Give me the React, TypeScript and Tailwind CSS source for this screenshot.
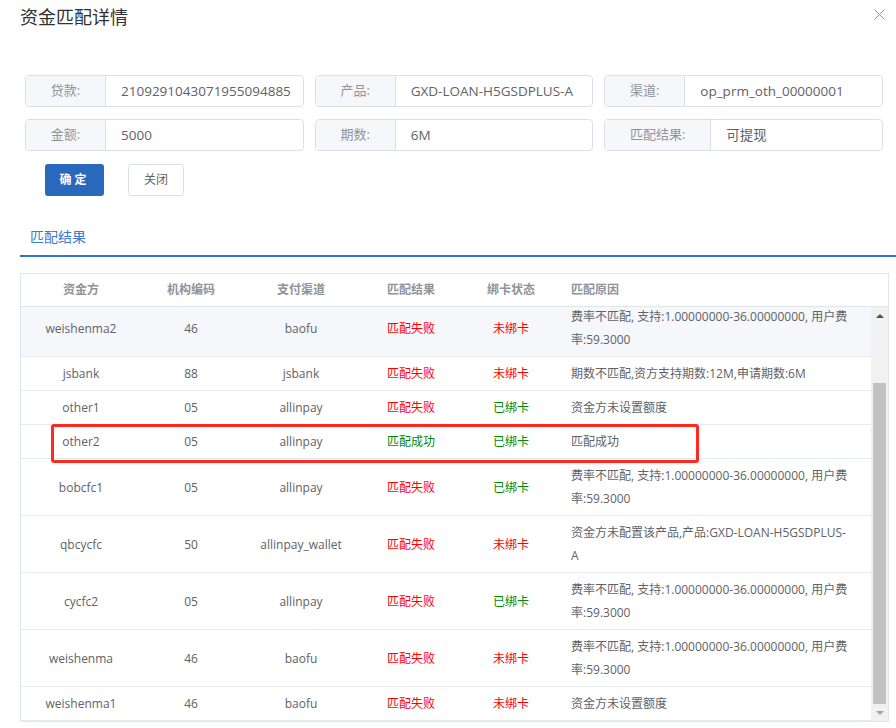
const fields = [
    { label: "贷款:", value: "2109291043071955094885", labelW: "w-[80px]" },
    { label: "产品:", value: "GXD-LOAN-H5GSDPLUS-A", labelW: "w-[80px]" },
    { label: "渠道:", value: "op_prm_oth_00000001", labelW: "w-[80px]" },
    { label: "金额:", value: "5000", labelW: "w-[80px]" },
    { label: "期数:", value: "6M", labelW: "w-[80px]" },
    { label: "匹配结果:", value: "可提现", labelW: "w-[106px]" }
];

const feeReason = ["费率不匹配, 支持:1.00000000-36.00000000, 用户费", "率:59.3000"];

const rows = [
    { name: "weishenma2", code: "46", pay: "baofu", ok: false, bound: false, reason: feeReason, striped: true },
    { name: "jsbank", code: "88", pay: "jsbank", ok: false, bound: false, reason: ["期数不匹配,资方支持期数:12M,申请期数:6M"] },
    { name: "other1", code: "05", pay: "allinpay", ok: false, bound: true, reason: ["资金方未设置额度"] },
    { name: "other2", code: "05", pay: "allinpay", ok: true, bound: true, reason: ["匹配成功"] },
    { name: "bobcfc1", code: "05", pay: "allinpay", ok: false, bound: true, reason: feeReason },
    { name: "qbcycfc", code: "50", pay: "allinpay_wallet", ok: false, bound: false, reason: ["资金方未配置该产品,产品:GXD-LOAN-H5GSDPLUS-", "A"] },
    { name: "cycfc2", code: "05", pay: "allinpay", ok: false, bound: true, reason: feeReason },
    { name: "weishenma", code: "46", pay: "baofu", ok: false, bound: false, reason: feeReason },
    { name: "weishenma1", code: "46", pay: "baofu", ok: false, bound: false, reason: ["资金方未设置额度"] }
];

const cols = "grid grid-cols-[120px_100px_120px_100px_100px_1fr]";

export default function App() {
    return (
        <div className="relative w-[896px] h-[728px] overflow-hidden bg-white text-[#606266] font-['Open_Sans','Noto_Sans_CJK_SC',sans-serif]">
            <div className="flex items-start justify-between h-[36px] pt-[4px] pl-[20px] pr-[11px]">
                <h1 className="text-[18px] leading-[26px] text-[#303133]">资金匹配详情</h1>
                <svg width="11" height="11" viewBox="0 0 11 11" className="mt-[5px]">
                    <path d="M0.5 0.5 L10.5 10.5 M10.5 0.5 L0.5 10.5" stroke="#909399" strokeWidth="1" />
                </svg>
            </div>

            <div className="grid grid-cols-3 gap-x-[11px] gap-y-[12px] mt-[39px] ml-[25px] w-[858px]">
                {fields.map((f) => (
                    <div key={f.label} className="flex h-[32px] border border-[#dcdfe6] rounded-[4px] overflow-hidden text-[13px]">
                        <div className={`${f.labelW} shrink-0 flex items-center justify-center bg-[#f5f7fa] border-r border-[#dcdfe6] text-[#909399]`}>
                            {f.label}
                        </div>
                        <div className="flex items-center pl-[15px] whitespace-nowrap text-[13.5px]">{f.value}</div>
                    </div>
                ))}
            </div>

            <div className="flex mt-[13px] pl-[45px] gap-[24px]">
                <button className="w-[59px] h-[32px] rounded-[3px] bg-[#2a68bd] text-white text-[12px] font-bold tracking-[3px]">确定</button>
                <button className="w-[56px] h-[32px] rounded-[3px] border border-[#dcdfe6] bg-white text-[12px]">关闭</button>
            </div>

            <div className="mt-[23px] ml-[20px] border-b-2 border-[#2f74d3] h-[38px]">
                <div className="pl-[10px] leading-[36px] text-[14px] text-[#3a7bd5]">匹配结果</div>
            </div>

            <div className="mt-[16px] ml-[20px] w-[869px] border border-[#dfe6ec] text-[12px]">
                <div className={`${cols} h-[33px] items-center border-b border-[#dfe6ec] font-bold text-[#909399]`}>
                    <div className="text-center">资金方</div>
                    <div className="text-center">机构编码</div>
                    <div className="text-center">支付渠道</div>
                    <div className="text-center">匹配结果</div>
                    <div className="text-center">绑卡状态</div>
                    <div className="pl-[10px]">匹配原因</div>
                </div>
                <div className="flex h-[414px]">
                    <div className="flex-1 overflow-hidden">
                        <div className="-mt-[7px]">
                            {rows.map((r) => (
                                <div key={r.name} className={`${cols} items-center py-[5px] border-b border-[#e6ebf2] leading-[23px] ${r.striped ? "bg-[#f5f7fa]" : "bg-white"}`}>
                                    <div className="text-center">{r.name}</div>
                                    <div className="text-center">{r.code}</div>
                                    <div className="text-center">{r.pay}</div>
                                    <div className={`text-center ${r.ok ? "text-[#008a00]" : "text-[#ff0000]"}`}>{r.ok ? "匹配成功" : "匹配失败"}</div>
                                    <div className={`text-center ${r.bound ? "text-[#008a00]" : "text-[#ff0000]"}`}>{r.bound ? "已绑卡" : "未绑卡"}</div>
                                    <div className="pl-[10px] whitespace-nowrap">
                                        {r.reason.map((line, i) => (
                                            <div key={i}>{line}</div>
                                        ))}
                                    </div>
                                </div>
                            ))}
                        </div>
                    </div>
                    <div className="w-[17px] flex flex-col bg-[#f1f1f1]">
                        <div className="h-[17px] flex items-center justify-center">
                            <div className="w-0 h-0 border-x-[4px] border-x-transparent border-b-[4px] border-b-[#505050]" />
                        </div>
                        <div className="flex-1 px-[2px]">
                            <div className="mt-[59px] h-[321px] bg-[#c1c1c1]" />
                        </div>
                        <div className="h-[17px] flex items-center justify-center">
                            <div className="w-0 h-0 border-x-[4px] border-x-transparent border-t-[4px] border-t-[#a3a3a3]" />
                        </div>
                    </div>
                </div>
            </div>

            <div className="absolute left-[51px] top-[424px] w-[648px] h-[39px] border-[3px] border-[#ff2a1f] rounded-[3px]" />
        </div>
    );
}
